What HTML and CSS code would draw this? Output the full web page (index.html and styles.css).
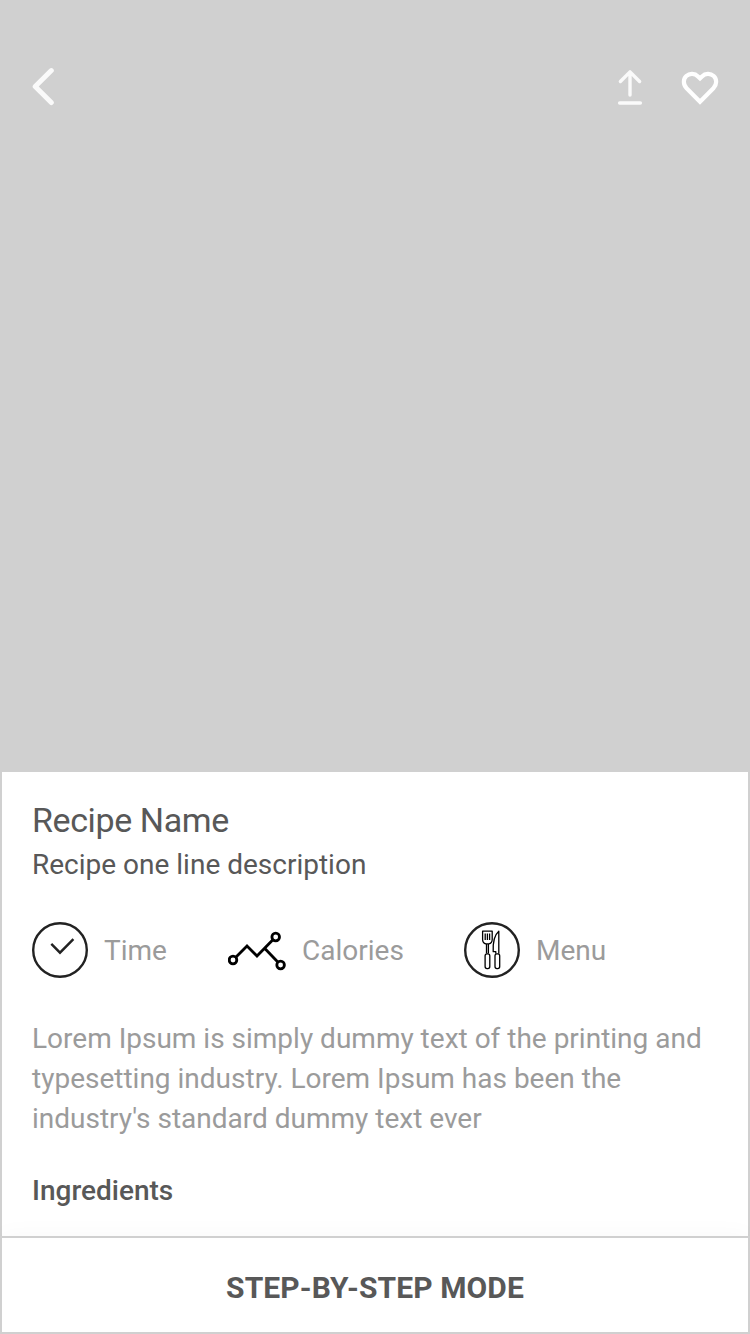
FILE: index.html
```html
<!DOCTYPE html>
<html lang="en">
  <head>
    <meta charset="utf-8">
    <title>Recipe</title>
    <link rel="stylesheet" href="styles.css">
  </head>
  <body>
    <!-- Recipe photo -->
    <header class="hero">
      <svg class="icon icon-back" width="24" height="42" viewBox="0 0 24 42">
        <path d="M19.3 4.6 L3.2 20.6 L19.3 36.6" />
      </svg>
      <div class="hero-actions">
        <svg class="icon icon-share" width="28" height="40" viewBox="0 0 28 40">
          <path d="M14 29 V6 M4.4 15.5 L14 5.9 L23.6 15.5" />
          <path d="M3.6 37 H24.4" />
        </svg>
        <svg class="icon icon-heart" width="40" height="40" viewBox="0 0 40 40">
          <path d="M20 35.8 L6.6 22.3 C3 18.6 3 13 6.3 10 C9.6 7 14.8 7.2 18 10.4 L20 12.4 L22 10.4 C25.2 7.2 30.4 7 33.7 10 C37 13 37 18.6 33.4 22.3 Z" />
        </svg>
      </div>
    </header>

    <!-- Recipe details -->
    <main class="details">
      <h1>Recipe Name</h1>
      <p class="subtitle">Recipe one line description</p>

      <ul class="meta">
        <li>
          <svg class="icon-time" width="56" height="56" viewBox="0 0 56 56">
            <circle cx="28" cy="28" r="26.8" />
            <path d="M19.3 21.8 L28 30.7 L41.4 17.2" />
          </svg>
          <span>Time</span>
        </li>
        <li>
          <svg class="icon-calories" width="58" height="56" viewBox="0 0 58 56">
            <circle cx="5" cy="38" r="3.8" />
            <circle cx="47.7" cy="15" r="3.8" />
            <circle cx="52.6" cy="43" r="3.8" />
            <path d="M7.8 35.2 L19 24 L29 34 L44.9 17.8 M36.6 26.2 L49.8 40" />
          </svg>
          <span>Calories</span>
        </li>
        <li>
          <svg class="icon-menu" width="56" height="56" viewBox="0 0 56 56">
            <circle cx="28" cy="28" r="26.8" />
            <path d="M18.6 9.2 H28.2 V17.4 C28.2 19.6 26.6 21.4 24.8 21.9 H21.9 C20.2 21.4 18.6 19.6 18.6 17.4 Z" />
            <path d="M21.2 11.5 V18 M23.4 11.5 V18 M25.6 11.5 V18" />
            <path d="M22.5 22 V31.6 M24.4 22 V31.6" />
            <rect x="21.1" y="31.8" width="4.7" height="14.8" rx="2" />
            <path d="M34.8 31.8 V9.2 C30.8 12.6 28.8 20 29.2 29.6 H31.8 V31.8" />
            <rect x="31" y="31.8" width="4.7" height="14.8" rx="2" />
          </svg>
          <span>Menu</span>
        </li>
      </ul>

      <p class="description">Lorem Ipsum is simply dummy text of the printing and typesetting industry. Lorem Ipsum has been the industry's standard dummy text ever</p>

      <h2>Ingredients</h2>
    </main>

    <button class="step-mode" type="button">STEP-BY-STEP MODE</button>
  </body>
</html>
```
FILE: styles.css
```css
* {
  box-sizing: border-box;
}

body {
  margin: 0;
  height: 1334px;
  display: flex;
  flex-direction: column;
  background: #fff;
  color: #585858;
  font-family: Roboto, "Liberation Sans", sans-serif;
  font-size: 28px;
  line-height: 40px;
}

h1,
h2,
p,
ul {
  margin: 0;
  padding: 0;
}

svg {
  display: block;
  flex: none;
  fill: none;
}

.hero {
  height: 772px;
  flex: none;
  display: flex;
  justify-content: space-between;
  align-items: flex-start;
  padding: 66px 30px 0 32px;
  background: #d0d0d0;
}

.hero-actions {
  display: flex;
  gap: 36px;
}

.icon {
  stroke: #fafafa;
  stroke-width: 5;
  stroke-linecap: round;
  stroke-linejoin: round;
}

.icon-share {
  stroke-width: 3.4;
}

.icon-heart {
  stroke: #fff;
  stroke-width: 4.2;
  stroke-linejoin: miter;
}

.details {
  flex: 1;
  padding: 28px 30px 0;
  border: solid #d0d0d0;
  border-width: 0 2px;
}

h1 {
  font-size: 34px;
  font-weight: 400;
  letter-spacing: -0.4px;
}

.subtitle {
  margin-top: 5px;
}

.meta {
  display: grid;
  grid-template-columns: 136px 176px auto;
  gap: 60px;
  margin: 37px 0 41px;
  list-style: none;
  color: #9b9b9b;
}

.meta li {
  display: flex;
  align-items: center;
  gap: 16px;
}

.meta span {
  padding-top: 2px;
}

.icon-time {
  stroke: #222;
  stroke-width: 2.4;
}

.icon-calories {
  stroke: #000;
  stroke-width: 2.8;
}

.icon-menu {
  stroke: #000;
  stroke-width: 1.3;
  stroke-linejoin: round;
}

.icon-menu circle {
  stroke: #222;
  stroke-width: 2.4;
}

.description {
  color: #9b9b9b;
}

h2 {
  margin-top: 32px;
  font-size: 28px;
  font-weight: 500;
}

.step-mode {
  height: 98px;
  padding: 5px 0 0;
  border: 2px solid #d0d0d0;
  background: #fff;
  box-shadow: 0 0 24px rgba(0, 0, 0, 0.03);
  color: #585858;
  font: 700 30px/40px Roboto, "Liberation Sans", sans-serif;
  letter-spacing: 0.1px;
}
```
